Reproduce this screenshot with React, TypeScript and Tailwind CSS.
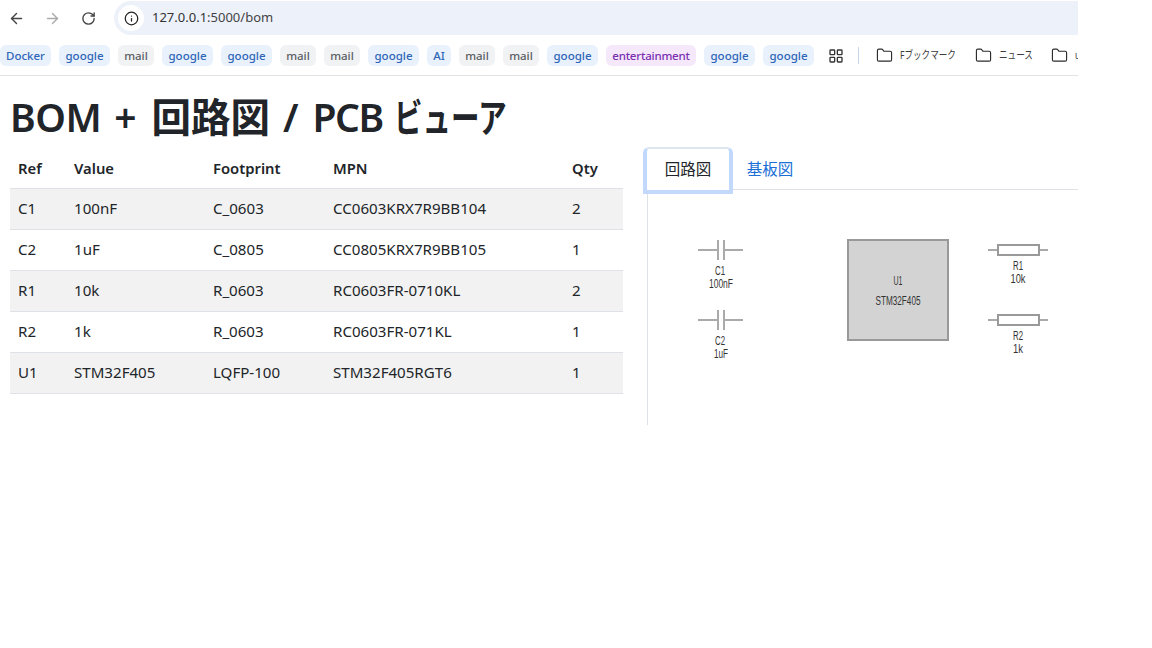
import { ArrowLeft, ArrowRight, RotateCw, Info, Folder, LayoutGrid } from "lucide-react";

// ── Data ───────────────────────────────────────────────────────────────────────

type Tone = "blue" | "gray" | "purple";

const TONE_CLASS: Record<Tone, string> = {
  blue: "bg-[#e9f1fc] text-[#2f66b8]",
  gray: "bg-[#f1f2f4] text-[#5b5e63]",
  purple: "bg-[#f5e8fb] text-[#7b2fb0]",
};

// label, tone, chip width class
const BOOKMARKS: [string, Tone, string][] = [
  ["Docker", "blue", "w-[51px]"],
  ["google", "blue", "w-[51px]"],
  ["mail", "gray", "w-[36px]"],
  ["google", "blue", "w-[51px]"],
  ["google", "blue", "w-[51px]"],
  ["mail", "gray", "w-[36px]"],
  ["mail", "gray", "w-[36px]"],
  ["google", "blue", "w-[51px]"],
  ["AI", "blue", "w-[24px]"],
  ["mail", "gray", "w-[36px]"],
  ["mail", "gray", "w-[36px]"],
  ["google", "blue", "w-[51px]"],
  ["entertainment", "purple", "w-[90px] tracking-[-0.2px]"],
  ["google", "blue", "w-[51px]"],
  ["google", "blue", "w-[51px]"],
];

const ROWS = [
  ["C1", "100nF", "C_0603", "CC0603KRX7R9BB104", "2"],
  ["C2", "1uF", "C_0805", "CC0805KRX7R9BB105", "1"],
  ["R1", "10k", "R_0603", "RC0603FR-0710KL", "2"],
  ["R2", "1k", "R_0603", "RC0603FR-071KL", "1"],
  ["U1", "STM32F405", "LQFP-100", "STM32F405RGT6", "1"],
];

const CJK = "font-['Noto_Sans','Noto_Sans_CJK_JP',sans-serif]";

// ── Sub-components ─────────────────────────────────────────────────────────────

function FolderLink({ label, width }: { label: string; width: string }) {
  return (
    <div className="flex items-center gap-[7px] shrink-0">
      <Folder className="h-[17px] w-[17px] text-[#2b2b2b]" strokeWidth={1.6} />
      <span className={`${width} whitespace-nowrap text-[11px] text-[#3c3c3c] ${CJK}`}>
        <span className="inline-block origin-left scale-x-[0.78]">{label}</span>
      </span>
    </div>
  );
}

function SchLabel({ x, y, width, children }: { x: number; y: number; width: number; children: string }) {
  return (
    <text
      x={x}
      y={y}
      textAnchor="middle"
      textLength={width}
      lengthAdjust="spacingAndGlyphs"
      fontSize="12"
      fontFamily="Liberation Sans, sans-serif"
      fill="#333"
    >
      {children}
    </text>
  );
}

function Capacitor({ y, name, value, valueWidth }: { y: number; name: string; value: string; valueWidth: number }) {
  return (
    <g>
      <path d={`M50 ${y}H70M76 ${y}H95M70 ${y - 10}V${y + 10}M76 ${y - 10}V${y + 10}`} stroke="#aaa" strokeWidth="2" fill="none" />
      <SchLabel x={72} y={y + 25} width={10}>{name}</SchLabel>
      <SchLabel x={73} y={y + 38} width={valueWidth}>{value}</SchLabel>
    </g>
  );
}

function Resistor({ y, name, value, valueWidth }: { y: number; name: string; value: string; valueWidth: number }) {
  return (
    <g>
      <path d={`M340 ${y}H350M390 ${y}H400`} stroke="#aaa" strokeWidth="2" fill="none" />
      <rect x={350} y={y - 5} width={41} height={10} stroke="#999" strokeWidth="2" fill="#fff" />
      <SchLabel x={370} y={y + 20} width={10}>{name}</SchLabel>
      <SchLabel x={370} y={y + 33} width={valueWidth}>{value}</SchLabel>
    </g>
  );
}

// ── Page ───────────────────────────────────────────────────────────────────────

export default function App() {
  return (
    <div className="h-[648px] w-[1152px] overflow-hidden bg-white font-['Noto_Sans',sans-serif]">
      <div className="w-[1078px] overflow-hidden">
        {/* Browser toolbar */}
        <div className="flex h-[44px] items-start pt-px">
          <div className="flex h-[35px] w-[114px] shrink-0 items-center pl-[8px]">
            <ArrowLeft className="h-[17px] w-[17px] text-[#444]" strokeWidth={2} />
            <ArrowRight className="ml-[19px] h-[17px] w-[17px] text-[#aaa]" strokeWidth={2} />
            <RotateCw className="ml-[20px] h-[15px] w-[15px] text-[#444]" strokeWidth={2.2} />
          </div>
          <div className="flex h-[34px] min-w-0 flex-1 items-center gap-[8px] rounded-l-full bg-[#edf1fa] pl-[4px]">
            <span className="flex h-[26px] w-[26px] items-center justify-center rounded-full bg-white">
              <Info className="h-[15px] w-[15px] text-[#222]" strokeWidth={2} />
            </span>
            <span className="text-[13px] text-[#333]">
              127.0.0.1<span className="text-[#444]">:5000/bom</span>
            </span>
          </div>
        </div>

        {/* Bookmarks bar */}
        <div className="flex h-[32px] items-start gap-2 border-b border-[#e2e3e5] pt-px">
          {BOOKMARKS.map(([label, tone, width], i) => (
            <span
              key={i}
              className={`flex h-[21px] shrink-0 items-center justify-center rounded-[6px] text-[11.5px] font-medium ${width} ${TONE_CLASS[tone]}`}
            >
              {label}
            </span>
          ))}
          <div className="ml-[6px] flex h-[21px] shrink-0 items-center">
            <LayoutGrid className="h-[16px] w-[16px] text-[#333]" strokeWidth={2} />
          </div>
          <div className="ml-[6px] mr-[5px] mt-[2px] h-[17px] w-px shrink-0 bg-[#c9d7ea]" />
          <div className="ml-[4px] flex h-[21px] items-center gap-[18px]">
            <FolderLink label="Fブックマーク" width="w-[57px]" />
            <FolderLink label="ニュース" width="w-[34px]" />
            <FolderLink label="u" width="w-[10px]" />
          </div>
        </div>

        {/* Page content */}
        <div className="pl-[10px]">
          <h1 className={`mt-[14px] flex h-[57px] items-baseline whitespace-nowrap text-[39px] font-semibold leading-[54px] text-[#212529] ${CJK}`}>
            <span className="tracking-[-0.5px]">BOM</span>
            <span className="ml-[13px]">+</span>
            <span className="ml-[15px] text-[39.5px]">回路図</span>
            <span className="ml-[13px]">/</span>
            <span className="ml-[14px] tracking-[-1.5px]">PCB</span>
            <span className="ml-[11px] w-[113px]">
              <span className="inline-block origin-left scale-x-[0.73]">ビューア</span>
            </span>
          </h1>
          <div className="flex items-start gap-[24px]">
            <table className="w-[613px] shrink-0 table-fixed border-collapse text-[15.1px] text-[#212529]">
              <colgroup>
                <col className="w-[56px]" />
                <col className="w-[139px]" />
                <col className="w-[120px]" />
                <col className="w-[239px]" />
                <col />
              </colgroup>
              <thead>
                <tr className="h-[41px] border-b border-[#dee2e6]">
                  {["Ref", "Value", "Footprint", "MPN", "Qty"].map((h) => (
                    <th key={h} className="px-2 pt-[1px] text-left text-[14.8px] font-semibold">{h}</th>
                  ))}
                </tr>
              </thead>
              <tbody>
                {ROWS.map((row, i) => (
                  <tr key={row[0]} className={`h-[41px] border-b border-[#dee2e6] ${i % 2 === 0 ? "bg-[#f2f2f2]" : "bg-white"}`}>
                    {row.map((cell, j) => (
                      <td key={j} className="px-2">{cell}</td>
                    ))}
                  </tr>
                ))}
              </tbody>
            </table>

            <div className="mt-[2px] min-w-0 flex-1">
              {/* Tabs */}
              <div className="flex h-[41px] items-start border-b border-[#dee2e6]">
                <button className={`-ml-[4px] -mt-[2px] h-[47px] w-[90px] shrink-0 rounded-t-[6px] border-x-4 border-b-4 border-t-2 border-x-[#c2d9fb] border-b-[#c2d9fb] border-t-[#dfe6f0] bg-white text-[15.5px] text-[#212529] ${CJK}`}>
                  回路図
                </button>
                <button className={`h-[41px] w-[78px] shrink-0 -ml-[2px] text-[15.5px] text-[#1a6fd6] ${CJK}`}>
                  基板図
                </button>
              </div>
              {/* Schematic */}
              <div className="h-[235px] border-l border-[#dee2e6]">
                <svg width="431" height="235" viewBox="0 0 431 235" className="block">
                  <Capacitor y={60} name="C1" value="100nF" valueWidth={24} />
                  <Capacitor y={130} name="C2" value="1uF" valueWidth={14} />
                  <rect x={200} y={50} width={100} height={100} fill="#d3d3d3" stroke="#999" strokeWidth="2" />
                  <SchLabel x={250} y={95} width={9}>U1</SchLabel>
                  <SchLabel x={250} y={115} width={45}>STM32F405</SchLabel>
                  <Resistor y={60} name="R1" value="10k" valueWidth={15} />
                  <Resistor y={130} name="R2" value="1k" valueWidth={10} />
                </svg>
              </div>
            </div>
          </div>
        </div>
      </div>
    </div>
  );
}
